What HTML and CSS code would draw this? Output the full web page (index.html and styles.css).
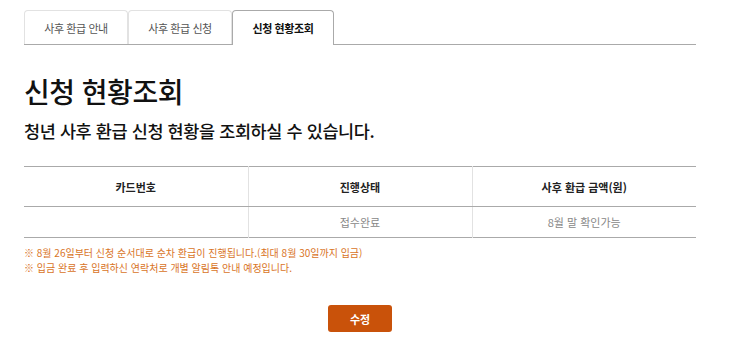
FILE: index.html
```html
<!DOCTYPE html>
<html lang="ko">

<head>
    <meta charset="UTF-8">
    <meta name="viewport" content="width=device-width, initial-scale=1.0">
    <title>신청 현황조회</title>
    <link rel="stylesheet" href="styles.css">
</head>

<body>
    <div class="container">
        <ul class="tabs">
            <li class="tab">사후 환급 안내</li>
            <li class="tab">사후 환급 신청</li>
            <li class="tab active">신청 현황조회</li>
        </ul>

        <h1>신청 현황조회</h1>
        <p class="lead">청년 사후 환급 신청 현황을 조회하실 수 있습니다.</p>

        <table class="status">
            <thead>
                <tr>
                    <th>카드번호</th>
                    <th>진행상태</th>
                    <th>사후 환급 금액(원)</th>
                </tr>
            </thead>
            <tbody>
                <tr>
                    <td></td>
                    <td>접수완료</td>
                    <td>8월 말 확인가능</td>
                </tr>
            </tbody>
        </table>

        <ul class="notes">
            <li>※ 8월 26일부터 신청 순서대로 순차 환급이 진행됩니다.(최대 8월 30일까지 입금)</li>
            <li>※ 입금 완료 후 입력하신 연락처로 개별 알림톡 안내 예정입니다.</li>
        </ul>

        <div class="actions">
            <button class="btn">수정</button>
        </div>
    </div>
</body>

</html>
```

FILE: styles.css
```css
body {
    font-family: "Noto Sans CJK KR", "Noto Sans", sans-serif;
    background: #fff;
    color: #111;
    margin: 0;
    padding: 0;
}

.container {
    width: 672px;
    margin: 0 0 0 24px;
    padding-top: 10px;
}

.tabs {
    display: flex;
    list-style: none;
    margin: 0;
    padding: 0;
    border-bottom: 1px solid #aaa;
}

.tab {
    width: 104px;
    height: 34px;
    box-sizing: border-box;
    border: 1px solid #e2e2e2;
    border-bottom: none;
    border-radius: 4px 4px 0 0;
    font-size: 11px;
    letter-spacing: -0.4px;
    color: #555;
    display: flex;
    align-items: center;
    justify-content: center;
}

.tab.active {
    width: 102px;
    border-color: #aaa;
    color: #111;
    font-weight: bold;
    background: #fff;
    margin-bottom: -1px;
    height: 35px;
}

h1 {
    font-size: 28px;
    font-weight: 500;
    margin: 28px 0 0;
    line-height: 36px;
    letter-spacing: -0.5px;
}

.lead {
    font-size: 17.5px;
    font-weight: 500;
    margin: 9px 0 0;
    line-height: 26px;
    letter-spacing: -0.4px;
}

.status {
    width: 100%;
    border-collapse: collapse;
    margin-top: 22px;
    border-top: 1px solid #aaa;
    border-bottom: 1px solid #aaa;
    table-layout: fixed;
}

.status th,
.status td {
    font-size: 11px;
    text-align: center;
    border-left: 1px solid #e2e2e2;
    padding: 0;
}

.status th:first-child,
.status td:first-child {
    border-left: none;
}

.status th {
    height: 39px;
    font-weight: bold;
    color: #222;
    border-bottom: 1px solid #aaa;
}

.status td {
    height: 30px;
    color: #888;
}

.notes {
    list-style: none;
    margin: 7px 0 0;
    padding: 0;
    font-size: 10px;
    line-height: 15px;
    color: #d9741f;
}

.actions {
    display: flex;
    justify-content: center;
    margin-top: 30px;
}

.btn {
    width: 64px;
    height: 27px;
    border: none;
    border-radius: 3px;
    background: #c9520a;
    color: #fff;
    font-family: inherit;
    font-size: 11px;
    font-weight: bold;
}
```
